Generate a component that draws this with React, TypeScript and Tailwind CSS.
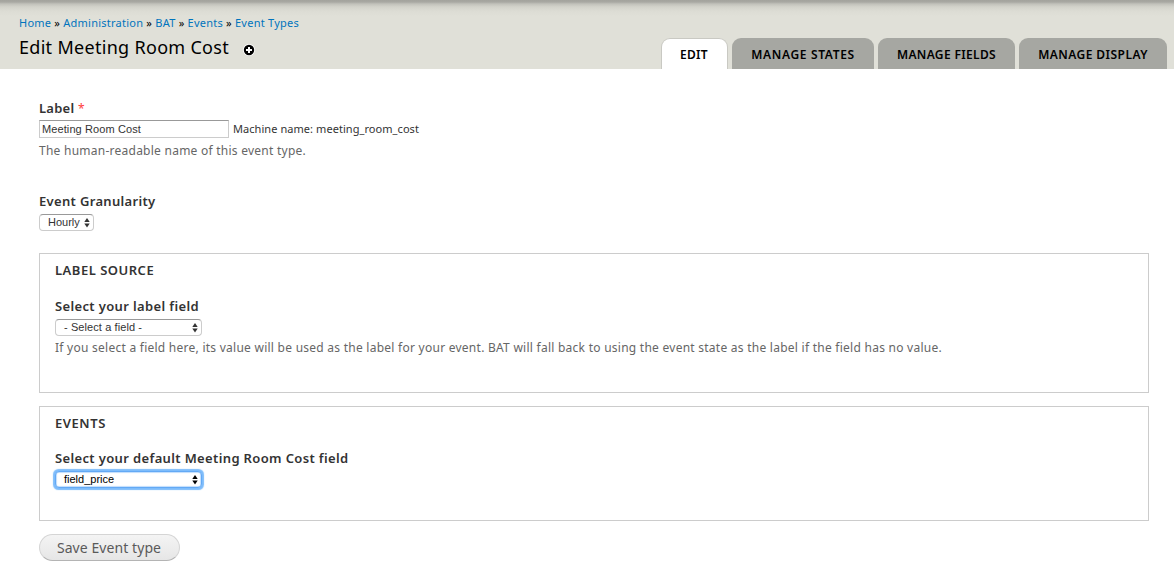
import { ReactNode } from "react";

function Arrows() {
  return (
    <svg width="6" height="10" viewBox="0 0 6 10" className="shrink-0" fill="currentColor" aria-hidden="true">
      <path d="M3 0 5.700 4H.3Z" />
      <path d="M3 9.500 .3 5.500H5.700Z" />
    </svg>
  );
}

function Select({ children, className }: { children: ReactNode; className: string }) {
  return (
    <button
      type="button"
      className={`flex h-[17px] items-center justify-between rounded-[4px] bg-white pr-[3.5px] pl-2 font-['Liberation_Sans',sans-serif] text-[11px] leading-[15px] ${className}`}
    >
      <span>{children}</span>
      <Arrows />
    </button>
  );
}

function Tab({ children, className }: { children: ReactNode; className: string }) {
  return (
    <li className={`h-[31px] rounded-t-[9px] text-center text-[12px] font-semibold whitespace-nowrap text-black ${className}`}>
      {children}
    </li>
  );
}

const crumbs = ["Home", "Administration", "BAT", "Events", "Event Types"];

export default function App() {
  return (
    <div className="h-[585px] overflow-hidden bg-white font-['Noto_Sans',sans-serif] text-[#333]">
      <header className="flex h-[69px] justify-between bg-[#e0e0d8] bg-[linear-gradient(to_bottom,#a3a39d_0px,#a8a8a2_2px,#c2c2bb_4px,#d3d3cb_7px,#dcdcd4_11px,#e0e0d8_16px)] pr-[7px] pl-[19px]">
        <div>
          <nav className="mt-[15px] h-4 text-[11px] leading-4 tracking-[0.24px] whitespace-nowrap text-black">
            {crumbs.map((c, i) => (
              <span key={c}>
                {i > 0 && " » "}
                <a className="text-[#0074bd]">{c}</a>
              </span>
            ))}
          </nav>
          <div className="mt-[3px] flex h-[26px] items-center">
            <h1 className="text-[18px] leading-[26px] tracking-[0.3px] whitespace-nowrap text-black">Edit Meeting Room Cost</h1>
            <svg width="12" height="12" viewBox="0 0 12 12" className="mt-[6px] ml-[13.500px]" aria-hidden="true">
              <circle cx="6" cy="6" r="6" fill="#fff" />
              <circle cx="6" cy="6" r="5.200" fill="#000" />
              <path d="M6 3v6M3 6h6" stroke="#fff" strokeWidth="2" />
            </svg>
          </div>
        </div>
        <ul className="flex items-end">
          <Tab className="mr-[4px] w-[67px] border border-b-0 border-[#c9c9c3] bg-white pr-px leading-[32px] tracking-[0.3px]">EDIT</Tab>
          <Tab className="mr-[4px] w-[142px] bg-[#a6a7a2] pt-px leading-[31px] tracking-[0.65px]">MANAGE STATES</Tab>
          <Tab className="mr-[4px] w-[137px] bg-[#a6a7a2] pt-px leading-[31px] tracking-[0.35px]">MANAGE FIELDS</Tab>
          <Tab className="w-[148px] bg-[#a6a7a2] pt-px leading-[31px] tracking-[0.45px]">MANAGE DISPLAY</Tab>
        </ul>
      </header>

      <main className="pt-[30px] pr-[25px] pl-[39px]">
        <label className="block h-[21px] text-[13px] leading-[18px] font-semibold tracking-[0.25px]">
          Label <span className="text-[12px] font-normal text-[#f00]/80">*</span>
        </label>
        <div className="flex h-[18px] items-center">
          <input
            readOnly
            value="Meeting Room Cost"
            className="h-[18px] w-[190px] border border-[#ccc] border-t-[#999] px-[2px] font-['Liberation_Sans',sans-serif] text-[11px] tracking-[0.1px] text-[#333]"
          />
          <span className="ml-[4px] text-[11px] tracking-[0.06px] whitespace-nowrap">Machine name: meeting_room_cost</span>
        </div>
        <p className="mt-[4px] h-[18px] text-[12px] leading-[18px] tracking-[0.25px] text-[#666]">The human-readable name of this event type.</p>

        <label className="mt-[32px] block h-[22px] text-[13px] leading-[18px] font-semibold tracking-[0.33px]">Event Granularity</label>
        <Select className="w-[55px] border border-[#ccc] border-t-[#999]">Hourly</Select>

        <section className="mt-[22px] h-[140px] border border-[#ccc] pl-[15px]">
          <h2 className="pt-[7px] text-[13px] leading-[18px] font-semibold tracking-[0.5px]">LABEL SOURCE</h2>
          <label className="mt-[18px] block h-[22px] text-[13px] leading-[18px] font-semibold tracking-[0.36px]">Select your label field</label>
          <Select className="w-[147px] border border-[#ccc] border-t-[#999] tracking-[0.09px]">- Select a field -</Select>
          <p className="mt-[3px] text-[12px] leading-[18px] tracking-[0.255px] whitespace-nowrap text-[#666]">
            If you select a field here, its value will be used as the label for your event. BAT will fall back to using the event state as the label if the field has no value.
          </p>
        </section>

        <section className="mt-[13px] h-[115px] border border-[#ccc] pl-[15px]">
          <h2 className="pt-[7px] text-[13px] leading-[18px] font-semibold tracking-[0.55px]">EVENTS</h2>
          <label className="mt-[17px] block h-[22px] text-[13px] leading-[18px] font-semibold tracking-[0.36px]">
            Select your default Meeting Room Cost field
          </label>
          <Select className="w-[147px] border border-[#63a9f5] text-black shadow-[0_0_1px_1.5px_#7dbcfb,inset_0_0_1px_0.5px_#8dc2fa]">field_price</Select>
        </section>

        <button
          type="button"
          className="mt-[13px] h-[27px] w-[141px] rounded-full border border-[#d5d5d5] border-b-[#b4b4b4] bg-linear-to-b from-[#f4f4f4] to-[#e6e6e6] pr-[7px] pl-[6px] text-[14px] leading-[24px] tracking-[0.08px] text-[#5a5a5a]"
        >
          Save Event type
        </button>
      </main>
    </div>
  );
}
